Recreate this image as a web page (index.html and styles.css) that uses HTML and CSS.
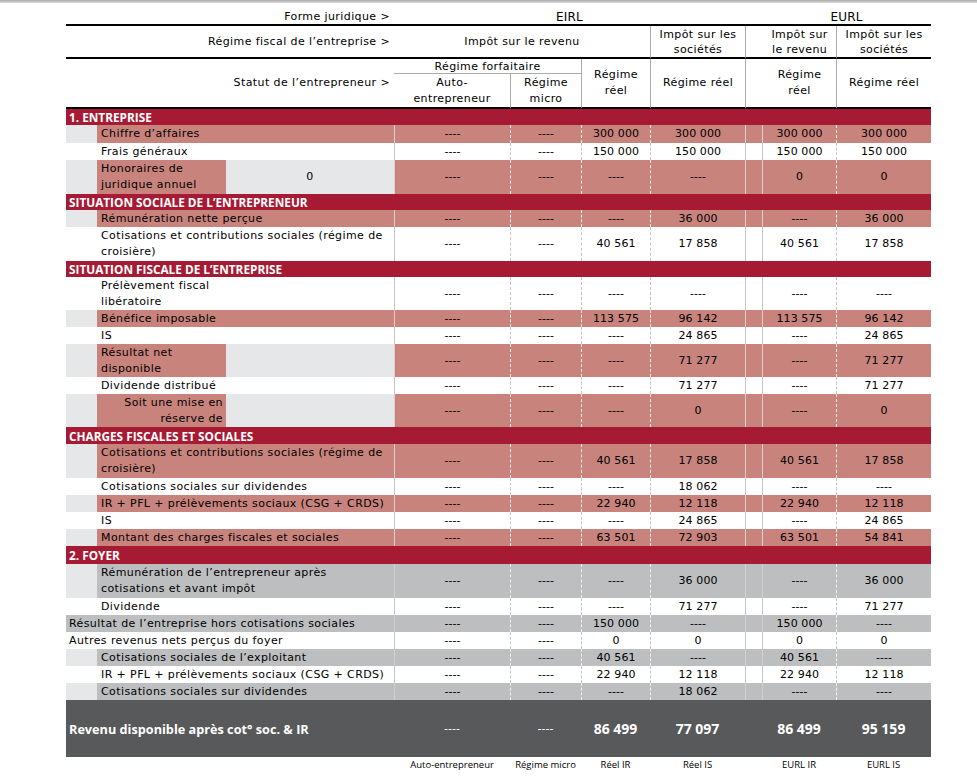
FILE: index.html
```html
<!DOCTYPE html>
<html lang="fr">
<head>
<meta charset="utf-8">
<title>Comparatif EIRL / EURL</title>
<link rel="stylesheet" href="styles.css">
</head>
<body>
<div class="topbar"></div>
<div class="wrap">
<table class="grid">
<colgroup>
<col class="w-ind"><col class="w-lbl"><col class="w-inp"><col class="w-a"><col class="w-b"><col class="w-c"><col class="w-d"><col class="w-x"><col class="w-e"><col class="w-f">
</colgroup>
<tbody>
<tr class="h1">
<td colspan="3" class="hl">Forme juridique &gt;</td>
<td colspan="4" class="hc big">EIRL</td>
<td></td>
<td colspan="2" class="hc big">EURL</td>
</tr>
<tr class="h2">
<td colspan="3" class="hl">Régime fiscal de l’entreprise &gt;</td>
<td colspan="3" class="hc">Impôt sur le revenu</td>
<td class="hc bl">Impôt sur les<br>sociétés</td>
<td colspan="2" class="hc bl gapc">Impôt sur<br>le revenu</td>
<td class="hc bl">Impôt sur les<br>sociétés</td>
</tr>
<tr class="h3a">
<td colspan="3" rowspan="2" class="hl hb">Statut de l’entrepreneur &gt;</td>
<td colspan="2" class="hc forf">Régime forfaitaire</td>
<td rowspan="2" class="hc bl hb">Régime<br>réel</td>
<td rowspan="2" class="hc bl hb">Régime réel</td>
<td colspan="2" rowspan="2" class="hc bl hb gapc">Régime<br>réel</td>
<td rowspan="2" class="hc bl hb">Régime réel</td>
</tr>
<tr class="h3b">
<td class="hc hb">Auto-<br>entrepreneur</td>
<td class="hc bl hb">Régime<br>micro</td>
</tr>

<tr class="sec s16"><td colspan="10">1. ENTREPRISE</td></tr>
<tr class="r s18"><td class="ind"></td><td class="lbl" colspan="2">Chiffre d’affaires</td><td class="a">----</td><td class="b">----</td><td class="c">300 000</td><td class="d">300 000</td><td class="x"></td><td class="e">300 000</td><td class="f">300 000</td></tr>
<tr class="w s17"><td class="ind"></td><td class="lbl" colspan="2">Frais généraux</td><td class="a">----</td><td class="b">----</td><td class="c">150 000</td><td class="d">150 000</td><td class="x"></td><td class="e">150 000</td><td class="f">150 000</td></tr>
<tr class="r s34"><td class="ind"></td><td class="lbl">Honoraires de<br>juridique annuel</td><td class="inp">0</td><td class="a">----</td><td class="b">----</td><td class="c">----</td><td class="d">----</td><td class="x"></td><td class="e">0</td><td class="f">0</td></tr>

<tr class="sec s16"><td colspan="10">SITUATION SOCIALE DE L’ENTREPRENEUR</td></tr>
<tr class="r s17"><td class="ind"></td><td class="lbl" colspan="2">Rémunération nette perçue</td><td class="a">----</td><td class="b">----</td><td class="c">----</td><td class="d">36 000</td><td class="x"></td><td class="e">----</td><td class="f">36 000</td></tr>
<tr class="w s34"><td class="ind"></td><td class="lbl" colspan="2">Cotisations et contributions sociales (régime de<br>croisière)</td><td class="a">----</td><td class="b">----</td><td class="c">40 561</td><td class="d">17 858</td><td class="x"></td><td class="e">40 561</td><td class="f">17 858</td></tr>

<tr class="sec s16"><td colspan="10">SITUATION FISCALE DE L’ENTREPRISE</td></tr>
<tr class="w s33"><td class="ind"></td><td class="lbl">Prélèvement fiscal<br>libératoire</td><td class="inp0"></td><td class="a">----</td><td class="b">----</td><td class="c">----</td><td class="d">----</td><td class="x"></td><td class="e">----</td><td class="f">----</td></tr>
<tr class="r s17"><td class="ind"></td><td class="lbl" colspan="2">Bénéfice imposable</td><td class="a">----</td><td class="b">----</td><td class="c">113 575</td><td class="d">96 142</td><td class="x"></td><td class="e">113 575</td><td class="f">96 142</td></tr>
<tr class="w s17"><td class="ind"></td><td class="lbl" colspan="2">IS</td><td class="a">----</td><td class="b">----</td><td class="c">----</td><td class="d">24 865</td><td class="x"></td><td class="e">----</td><td class="f">24 865</td></tr>
<tr class="r s33"><td class="ind"></td><td class="lbl">Résultat net<br>disponible</td><td class="inp"></td><td class="a">----</td><td class="b">----</td><td class="c">----</td><td class="d">71 277</td><td class="x"></td><td class="e">----</td><td class="f">71 277</td></tr>
<tr class="w s17"><td class="ind"></td><td class="lbl" colspan="2">Dividende distribué</td><td class="a">----</td><td class="b">----</td><td class="c">----</td><td class="d">71 277</td><td class="x"></td><td class="e">----</td><td class="f">71 277</td></tr>
<tr class="r s33"><td class="ind"></td><td class="lbl rt">Soit une mise en<br>réserve de</td><td class="inp"></td><td class="a">----</td><td class="b">----</td><td class="c">----</td><td class="d">0</td><td class="x"></td><td class="e">----</td><td class="f">0</td></tr>

<tr class="sec s17"><td colspan="10">CHARGES FISCALES ET SOCIALES</td></tr>
<tr class="r s34"><td class="ind"></td><td class="lbl" colspan="2">Cotisations et contributions sociales (régime de<br>croisière)</td><td class="a">----</td><td class="b">----</td><td class="c">40 561</td><td class="d">17 858</td><td class="x"></td><td class="e">40 561</td><td class="f">17 858</td></tr>
<tr class="w s17"><td class="ind"></td><td class="lbl" colspan="2">Cotisations sociales sur dividendes</td><td class="a">----</td><td class="b">----</td><td class="c">----</td><td class="d">18 062</td><td class="x"></td><td class="e">----</td><td class="f">----</td></tr>
<tr class="r s17"><td class="ind"></td><td class="lbl" colspan="2">IR + PFL + prélèvements sociaux (CSG + CRDS)</td><td class="a">----</td><td class="b">----</td><td class="c">22 940</td><td class="d">12 118</td><td class="x"></td><td class="e">22 940</td><td class="f">12 118</td></tr>
<tr class="w s17"><td class="ind"></td><td class="lbl" colspan="2">IS</td><td class="a">----</td><td class="b">----</td><td class="c">----</td><td class="d">24 865</td><td class="x"></td><td class="e">----</td><td class="f">24 865</td></tr>
<tr class="r s17"><td class="ind"></td><td class="lbl" colspan="2">Montant des charges fiscales et sociales</td><td class="a">----</td><td class="b">----</td><td class="c">63 501</td><td class="d">72 903</td><td class="x"></td><td class="e">63 501</td><td class="f">54 841</td></tr>

<tr class="sec s18"><td colspan="10">2. FOYER</td></tr>
<tr class="g s34"><td class="ind"></td><td class="lbl" colspan="2">Rémunération de l’entrepreneur après<br>cotisations et avant impôt</td><td class="a">----</td><td class="b">----</td><td class="c">----</td><td class="d">36 000</td><td class="x"></td><td class="e">----</td><td class="f">36 000</td></tr>
<tr class="w s17"><td class="ind"></td><td class="lbl" colspan="2">Dividende</td><td class="a">----</td><td class="b">----</td><td class="c">----</td><td class="d">71 277</td><td class="x"></td><td class="e">----</td><td class="f">71 277</td></tr>
<tr class="g s17"><td class="lbl full" colspan="3">Résultat de l’entreprise hors cotisations sociales</td><td class="a">----</td><td class="b">----</td><td class="c">150 000</td><td class="d">----</td><td class="x"></td><td class="e">150 000</td><td class="f">----</td></tr>
<tr class="w s17"><td class="lbl full" colspan="3">Autres revenus nets perçus du foyer</td><td class="a">----</td><td class="b">----</td><td class="c">0</td><td class="d">0</td><td class="x"></td><td class="e">0</td><td class="f">0</td></tr>
<tr class="g s17"><td class="ind"></td><td class="lbl" colspan="2">Cotisations sociales de l’exploitant</td><td class="a">----</td><td class="b">----</td><td class="c">40 561</td><td class="d">----</td><td class="x"></td><td class="e">40 561</td><td class="f">----</td></tr>
<tr class="w s17"><td class="ind"></td><td class="lbl" colspan="2">IR + PFL + prélèvements sociaux (CSG + CRDS)</td><td class="a">----</td><td class="b">----</td><td class="c">22 940</td><td class="d">12 118</td><td class="x"></td><td class="e">22 940</td><td class="f">12 118</td></tr>
<tr class="g s17"><td class="ind"></td><td class="lbl" colspan="2">Cotisations sociales sur dividendes</td><td class="a">----</td><td class="b">----</td><td class="c">----</td><td class="d">18 062</td><td class="x"></td><td class="e">----</td><td class="f">----</td></tr>

<tr class="tot"><td class="lbl full" colspan="3">Revenu disponible après cot° soc. &amp; IR</td><td class="a">----</td><td class="b">----</td><td class="c">86 499</td><td class="d">77 097</td><td class="x"></td><td class="e">86 499</td><td class="f">95 159</td></tr>
<tr class="foot"><td colspan="3"></td><td class="a">Auto-entrepreneur</td><td class="b">Régime micro</td><td class="c">Réel IR</td><td class="d">Réel IS</td><td class="x"></td><td class="e">EURL IR</td><td class="f">EURL IS</td></tr>
</tbody>
</table>
</div>
</body>
</html>
```
FILE: styles.css
```css
* { box-sizing: border-box; }
html, body { margin: 0; padding: 0; background: #fff; }
body {
  font-family: "DejaVu Sans", "Open Sans", sans-serif;
  font-size: 11px;
  letter-spacing: 0.4px;
  color: #000;
}
.topbar {
  height: 3px;
  background: linear-gradient(#a9a9a9, #dedede);
}
.wrap { padding: 5px 0 0 66px; }

.grid {
  border-collapse: separate;
  border-spacing: 0;
  table-layout: fixed;
  width: 865px;
}
.grid td {
  padding: 0;
  line-height: 14px;
  white-space: nowrap;
  overflow: hidden;
  vertical-align: middle;
}
.w-ind { width: 31px; }
.w-lbl { width: 129px; }
.w-inp { width: 168px; }
.w-a { width: 116px; }
.w-b { width: 71px; }
.w-c { width: 69px; }
.w-d { width: 95px; }
.w-x { width: 17px; }
.w-e { width: 74px; }
.w-f { width: 95px; }

/* header */
.h1 { height: 18px; }
.h2 { height: 33px; }
.h3a { height: 15px; }
.h3b { height: 35px; }
.h1 td, .h2 td, .hb { border-bottom: 2px solid #000; }
.h1 td { padding-top: 1px !important; }
.hl { text-align: right; padding-right: 4px !important; }
.hc { text-align: center; }
.big { font-size: 12px; letter-spacing: 0.2px; }
.bl { border-left: 1px solid #ababab; }
.gapc { padding-left: 17px !important; }
.forf { border-bottom: 1px solid #ababab; line-height: 13px !important; }
.h2 .hc { line-height: 15px; }
.h3b .hc, .h3a .hb { line-height: 16px; }

/* rows */
.s16 { height: 16px; }
.s17 { height: 17px; }
.s18 { height: 18px; }
.s33 { height: 33px; }
.s34 { height: 34px; }
.s33 td, .s34 td { line-height: 16px; }

.sec td {
  background: #a61b33;
  color: #fff;
  font-family: "Open Sans", sans-serif;
  font-weight: bold;
  font-size: 11.8px;
  letter-spacing: 0;
  padding-left: 3px;
  line-height: 14px;
}
.lbl { padding-left: 4px !important; text-align: left; }
.lbl.full { padding-left: 3px !important; }
.lbl.rt { text-align: right; padding-right: 3px !important; }
.a, .b, .c, .d, .e, .f { text-align: center; letter-spacing: 0.1px; }
.inp { text-align: center; }

.r td { background: #c8837c; }
.r .ind, .r .inp, .g .ind { background: #e6e7e8; }
.w td { background: #fff; }
.g td { background: #bcbec0; }

.a { border-left: 1px solid #c4c4c4; }
.b, .c, .d, .f { border-left: 1px dashed #c4c4c4; }
.x, .e { border-left: 1px solid #c4c4c4; }

.r .a, .r .x, .r .e { border-left-color: #e2cfcc; }
.r .b, .r .c, .r .d, .r .f { border-left-color: #f4ecea; }
.g .b, .g .c, .g .d, .g .f { border-left-color: #f2f2f2; }
.g .a, .g .x, .g .e { border-left-color: #d0d0d0; }

.tot { height: 57px; }
.tot td {
  background: #58595b;
  color: #fff;
  font-family: "Open Sans", sans-serif;
  font-weight: bold;
  font-size: 12.7px;
  letter-spacing: 0;
  border-left: none;
}
.tot .c, .tot .d, .tot .e, .tot .f { font-size: 14px; }
.tot .b, .tot .a { font-family: "DejaVu Sans", sans-serif; font-weight: normal; font-size: 11px; letter-spacing: 0.1px; }

.foot { height: 15px; }
.foot td {
  font-family: "Open Sans", sans-serif;
  font-size: 9.5px;
  letter-spacing: 0;
  text-align: center;
  border-left: none;
  vertical-align: top;
  line-height: 14px;
  padding-top: 1px;
}
```
